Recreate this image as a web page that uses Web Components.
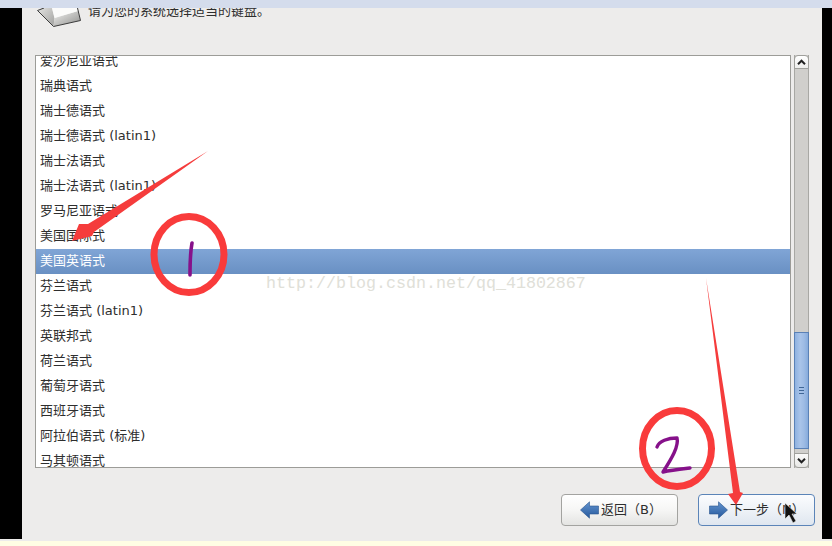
<!DOCTYPE html>
<html lang="zh"><head><meta charset="utf-8"><style>
html,body{margin:0;padding:0;background:#000}
body{width:832px;height:546px;overflow:hidden;font:13px "DejaVu Sans","Noto Sans CJK SC",sans-serif}
</style></head><body>
<installer-screen>
  <key-header slot="header">请为您的系统选择适当的键盘。</key-header>
  <lang-list slot="list">
    <lang-row>爱沙尼亚语式</lang-row><lang-row>瑞典语式</lang-row><lang-row>瑞士德语式</lang-row><lang-row>瑞士德语式 (latin1)</lang-row><lang-row>瑞士法语式</lang-row><lang-row>瑞士法语式 (latin1)</lang-row><lang-row>罗马尼亚语式</lang-row><lang-row>美国国际式</lang-row><lang-row selected>美国英语式</lang-row><lang-row>芬兰语式</lang-row><lang-row>芬兰语式 (latin1)</lang-row><lang-row>英联邦式</lang-row><lang-row>荷兰语式</lang-row><lang-row>葡萄牙语式</lang-row><lang-row>西班牙语式</lang-row><lang-row>阿拉伯语式 (标准)</lang-row><lang-row>马其顿语式</lang-row>
  </lang-list>
  <nav-button slot="buttons" dir="back">返回（B）</nav-button>
  <nav-button slot="buttons" dir="next" focused>下一步（N）</nav-button>
</installer-screen>
<annotation-layer></annotation-layer>
<script>
function def(name, html, init){
  customElements.define(name, class extends HTMLElement{
    constructor(){super();this.attachShadow({mode:'open'}).innerHTML=html;}
    connectedCallback(){ if(init) init(this); }
  });
}
def('installer-screen',`<style>
:host{display:flex;flex-direction:column;width:832px;height:546px;background:#000}
.top{height:8px;background:#d4dcec;flex:none;position:relative;z-index:1}
.mid{flex:1;display:flex;min-height:0;padding:0 10px 0 22px}
.win{flex:1;background:#edeceb;display:flex;flex-direction:column;min-width:0;overflow:hidden}
.head{height:47px;flex:none}
.body{height:413px;flex:none;display:flex;gap:3px;padding:0 13px}
.foot{flex:1;display:flex;justify-content:flex-end;gap:20px;padding:26px 7px 0 0}
.s1{height:2px;background:#edeceb;flex:none}
.s2{height:5px;background:#fffee4;flex:none}
</style><div class="top"></div><div class="mid"><div class="win">
<div class="head"><slot name="header"></slot></div>
<div class="body"><slot name="list"></slot><scroll-bar></scroll-bar></div>
<div class="foot"><slot name="buttons"></slot></div>
</div></div><div class="s1"></div><div class="s2"></div>`);

def('key-header',`<style>
:host{display:flex;height:47px;overflow:hidden;color:#2e2e2e;font-size:13px}
.ico{flex:none;margin:0 0 0 15px;width:46px;height:21px}
.t{margin:-7px 0 0 5px;line-height:20px;height:20px;white-space:nowrap}
</style><svg class="ico" viewBox="37 8 46 21">
<defs><linearGradient id="f" x1="0" y1="0" x2="1" y2="1"><stop offset="0" stop-color="#f0f0ee"/><stop offset="1" stop-color="#8e8e8c"/></linearGradient>
<linearGradient id="s" x1="0" y1="0" x2="1" y2="1"><stop offset="0" stop-color="#e4e4e2"/><stop offset="1" stop-color="#a0a09e"/></linearGradient></defs>
<path d="M37.5 10.5 L53.5 26.5 L54.5 18 L52 8 L43 8 Z" fill="url(#s)"/>
<path d="M54.5 18 L53.5 26.5 L80.5 20.5 L78 11 Z" fill="url(#f)"/>
<path d="M52 8 L54.5 18 L78 11 L77 8 Z" fill="#fbfbfa"/>
<path d="M44 8 L37.5 10.5 L53.5 26.5 L80.5 20.5 L77.5 8" fill="none" stroke="#3c3c3c" stroke-width="1"/></svg>
<div class="t"><slot></slot></div>`);

def('lang-list',`<style>
:host{display:block;width:756px;height:413px;box-sizing:border-box;border:1px solid #9c9c98;background:#fff;overflow:hidden}
.in{margin-top:-7px}
</style><div class="in"><slot></slot></div>`);

def('lang-row',`<style>
:host{display:block;height:25px;line-height:24px;padding-left:4px;color:#2e2e2e;font-size:13px;white-space:nowrap}
:host([selected]){color:#fff;background:linear-gradient(#80a5d6,#6990c3)}
</style><slot></slot>`);

def('scroll-bar',`<style>
:host{display:flex;flex-direction:column;width:15px;height:413px;background:#d0cfcc;box-sizing:border-box;border-left:1px solid #a8a8a4;border-right:1px solid #a8a8a4}
.b{height:14px;flex:none;margin:0 -1px;box-sizing:border-box;border:1px solid #a0a09c;background:linear-gradient(#fff,#eeeeec);display:flex;align-items:center;justify-content:center}
.up{border-radius:4px 4px 0 0}.dn{border-radius:0 0 4px 4px;height:15px;background:linear-gradient(#fafaf9,#e8e8e6)}
.sp{flex:1}.gap{height:4px;flex:none}
.th{height:117px;flex:none;margin:0 -1px;box-sizing:border-box;border:1px solid #5a81b6;background:linear-gradient(90deg,#8fb2e0,#a9c4e9 40%,#9dbbe4 70%,#86abdc);display:flex;align-items:center;justify-content:center}
</style>
<div class="b up"><svg width="9" height="6" viewBox="0 0 9 6"><path d="M1 5.2 L4.5 1.7 L8 5.2" fill="none" stroke="#222" stroke-width="2"/></svg></div>
<div class="sp"></div>
<div class="th"><svg width="7" height="9" viewBox="0 0 7 9"><path d="M1 1.5H6M1 4.5H6M1 7.5H6" stroke="#3f6696" stroke-width="1" /></svg></div>
<div class="gap"></div>
<div class="b dn"><svg width="9" height="6" viewBox="0 0 9 6"><path d="M1 .8 L4.5 4.3 L8 .8" fill="none" stroke="#222" stroke-width="2"/></svg></div>`);

def('nav-button',`<style>
:host{display:flex;align-items:center;width:117px;height:32px;box-sizing:border-box;border:1px solid #a3a3a0;border-radius:4px;background:linear-gradient(#fff 0,#f6f6f5 50%,#e4e4e2 100%);color:#2e2e2e;font-size:13px;white-space:nowrap;padding-left:18px;gap:2px}
:host([focused]){border-color:#5b84b8;background:linear-gradient(#fbfcfe,#eef2f7 50%,#dfe6ef);padding-left:10px}
svg{flex:none}
.l{margin-top:-3px}
</style><svg width="19" height="19" viewBox="0 0 19 19"><defs><linearGradient id="a" x1="0" y1="0" x2="0" y2="1"><stop offset="0" stop-color="#6394cf"/><stop offset="1" stop-color="#25589c"/></linearGradient></defs><path id="p" fill="url(#a)" stroke="#2a568f" stroke-width=".6" d=""/></svg><span class="l"><slot></slot></span>`,
 el=>{const p=el.shadowRoot.getElementById('p');
  p.setAttribute('d', el.getAttribute('dir')==='back' ? 'M.5 9 L9.5 .8 V5 H18.5 V13 H9.5 V17.2 Z' : 'M18.5 9 L9.5 .8 V5 H.5 V13 H9.5 V17.2 Z');});

def('annotation-layer',`<style>
:host{display:block;position:absolute;left:0;top:0;width:832px;height:546px;pointer-events:none;z-index:2}
svg{position:absolute;left:0;top:0}
.wm{position:absolute;left:266px;top:274px;font:16.67px/20px "Liberation Mono",monospace;color:#e0e0d8;white-space:nowrap}
</style><div class="wm">http://blog.csdn.net/qq_41802867</div>
<svg width="832" height="546" viewBox="0 0 832 546">
<path d="M208 151 L88 224 L79 224 L72 241 L92 236 L94 232 Z" fill="#f53c3c"/>
<path d="M706 278 L733 493 L728 494 L736 505 L743 493 L740 492 Z" fill="#f53c3c"/>
<ellipse cx="189" cy="254.5" rx="35" ry="38" fill="none" stroke="#f93b3b" stroke-width="7"/>
<ellipse cx="677" cy="448.5" rx="34.5" ry="38" fill="none" stroke="#f93b3b" stroke-width="7"/>
<path d="M192 243 C190 254 190 264 190 275" fill="none" stroke="#86118a" stroke-width="3.6" stroke-linecap="round"/>
<path d="M657 447 C659 441 668 438 677 438 C679 446 672 458 663 472 C671 470 681 469 690 468" fill="none" stroke="#86118a" stroke-width="3.4" stroke-linecap="round" stroke-linejoin="round"/>
<path d="M785 503 V519 L789 515 L793 523 L796 521 L792 514 L797 514 Z" fill="#111" stroke="#eee" stroke-width=".6"/>
</svg>`);
</script></body></html>
